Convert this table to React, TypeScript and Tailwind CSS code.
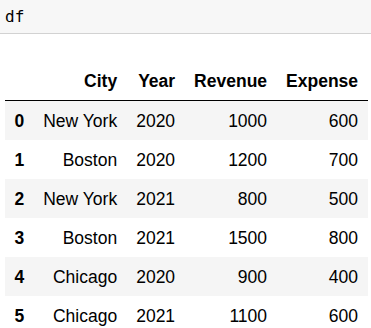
const rows = [
  { city: "New York", year: 2020, revenue: 1000, expense: 600 },
  { city: "Boston", year: 2020, revenue: 1200, expense: 700 },
  { city: "New York", year: 2021, revenue: 800, expense: 500 },
  { city: "Boston", year: 2021, revenue: 1500, expense: 800 },
  { city: "Chicago", year: 2020, revenue: 900, expense: 400 },
  { city: "Chicago", year: 2021, revenue: 1100, expense: 600 },
];

const cell = "px-[9.5px] py-[9.5px] text-right align-middle leading-5";
const headers = ["City", "Year", "Revenue", "Expense"];

export default function App() {
  return (
    <div className="w-[371px] h-[328px] overflow-hidden bg-white text-black">
      {/* input cell */}
      <div className="h-[34px] bg-[#f7f7f7] border-b border-[#d2d2d2] pl-[5px] pt-1">
        <span className="font-['DejaVu_Sans_Mono',monospace] text-[16px] leading-[19px]">df</span>
      </div>

      {/* dataframe output */}
      <table className="ml-[5px] mt-[27px] border-collapse font-['Liberation_Sans',Arial,sans-serif] text-[17.5px]">
        <thead>
          <tr className="border-b border-black">
            <th className={cell}></th>
            {headers.map((h) => (
              <th key={h} className={`${cell} font-bold`}>
                {h}
              </th>
            ))}
          </tr>
        </thead>
        <tbody>
          {rows.map((r, i) => (
            <tr key={i} className={i % 2 === 0 ? "bg-[#f5f5f5]" : "bg-white"}>
              <th className={`${cell} font-bold`}>{i}</th>
              <td className={cell}>{r.city}</td>
              <td className={cell}>{r.year}</td>
              <td className={cell}>{r.revenue}</td>
              <td className={cell}>{r.expense}</td>
            </tr>
          ))}
        </tbody>
      </table>
    </div>
  );
}
